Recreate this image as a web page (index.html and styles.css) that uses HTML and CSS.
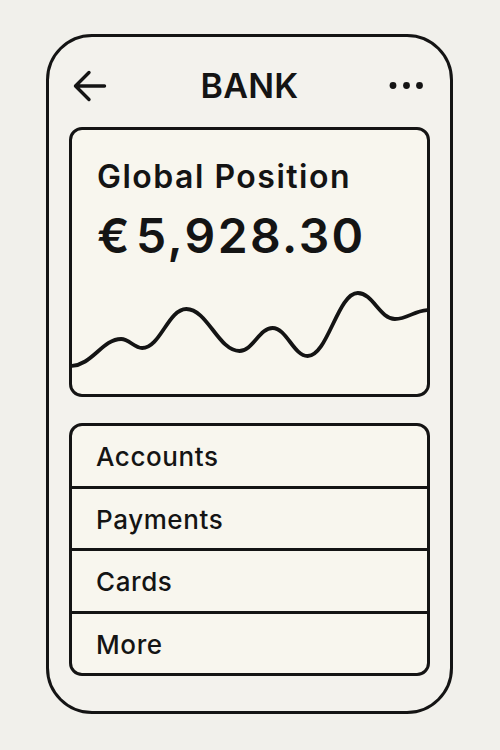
FILE: index.html
```html
<!DOCTYPE html>
<html lang="en">
<head>
<meta charset="utf-8">
<title>Bank</title>
<link rel="stylesheet" href="styles.css">
</head>
<body>
<div class="phone">
  <header class="topbar">
    <svg class="icon-back" width="40" height="34" viewBox="0 0 40 34" aria-hidden="true">
      <path d="M6.5 17 H35.5 M6.5 17 L20 3.5 M6.5 17 L20 30.5" fill="none" stroke="#141414" stroke-width="3.4" stroke-linecap="round" stroke-linejoin="round"/>
    </svg>
    <h1 class="title">BANK</h1>
    <svg class="icon-more" width="44" height="34" viewBox="0 0 44 34" aria-hidden="true">
      <circle cx="7" cy="16.5" r="3.4" fill="#141414"/>
      <circle cx="20.5" cy="16.5" r="3.4" fill="#141414"/>
      <circle cx="33.5" cy="16.5" r="3.4" fill="#141414"/>
    </svg>
  </header>

  <section class="card position">
    <div class="pos-label">Global Position</div>
    <div class="pos-amount"><span class="currency">€</span>5,928.30</div>
    <svg class="chart" viewBox="0 0 354 110" preserveAspectRatio="none" aria-hidden="true">
      <path d="M-2 82 C20 82 30 55 49 55 C57 55 62 64 70 64 C88 64 96 25 114 25 C135 25 146 67 167 67 C180 67 187 44 200 44 C214 44 221 72 235 72 C255 72 265 9 285 9 C300 9 307 35 322 35 C335 35 342 26 356 26" fill="none" stroke="#141414" stroke-width="3.8" stroke-linecap="round" stroke-linejoin="round"/>
    </svg>
  </section>

  <nav class="card menu">
    <div class="menu-item">Accounts</div>
    <div class="menu-item">Payments</div>
    <div class="menu-item">Cards</div>
    <div class="menu-item">More</div>
  </nav>
</div>
</body>
</html>
```

FILE: styles.css
```css
* { box-sizing: border-box; }

html, body {
  margin: 0;
  padding: 0;
  background: #f1f0eb;
}

body {
  width: 500px;
  height: 750px;
  font-family: Inter, "Liberation Sans", Arial, sans-serif;
  color: #141414;
  padding-top: 34px;
  padding-left: 46px;
}

.phone {
  width: 407px;
  height: 680px;
  border: 3.7px solid #141414;
  border-radius: 46px;
  background: #f3f2ed;
  padding: 32.3px 20px 0 20px;
  display: flex;
  flex-direction: column;
}

.topbar {
  height: 34px;
  display: grid;
  grid-template-columns: 1fr auto 1fr;
  align-items: center;
}

.icon-back { justify-self: start; display: block; }
.icon-more { justify-self: end; display: block; }

.title {
  margin: 0;
  font-size: 34px;
  line-height: 34px;
  font-weight: 600;
  letter-spacing: 0.3px;
}

.card {
  border: 3.2px solid #141414;
  border-radius: 13px;
  background: #f8f6ee;
}

.position {
  margin-top: 24px;
  height: 270px;
  padding: 31px 0 0 0;
  display: flex;
  flex-direction: column;
  overflow: hidden;
}

.pos-label {
  font-size: 32px;
  line-height: 32px;
  font-weight: 600;
  letter-spacing: 1.5px;
  padding-left: 25px;
}

.pos-amount {
  margin-top: 19px;
  font-size: 48px;
  line-height: 48px;
  font-weight: 600;
  letter-spacing: 2.4px;
  padding-left: 25px;
}

.currency {
  margin-right: 4px;
}

.chart {
  margin-top: auto;
  display: block;
  width: 100%;
  height: 110px;
}

.menu {
  margin-top: 26px;
  height: 253px;
  display: flex;
  flex-direction: column;
  overflow: hidden;
}

.menu-item {
  flex: 1;
  display: flex;
  align-items: center;
  padding-left: 24px;
  padding-top: 1px;
  font-size: 26px;
  font-weight: 500;
  letter-spacing: 0.6px;
}

.menu-item + .menu-item {
  border-top: 3.2px solid #141414;
}
```
